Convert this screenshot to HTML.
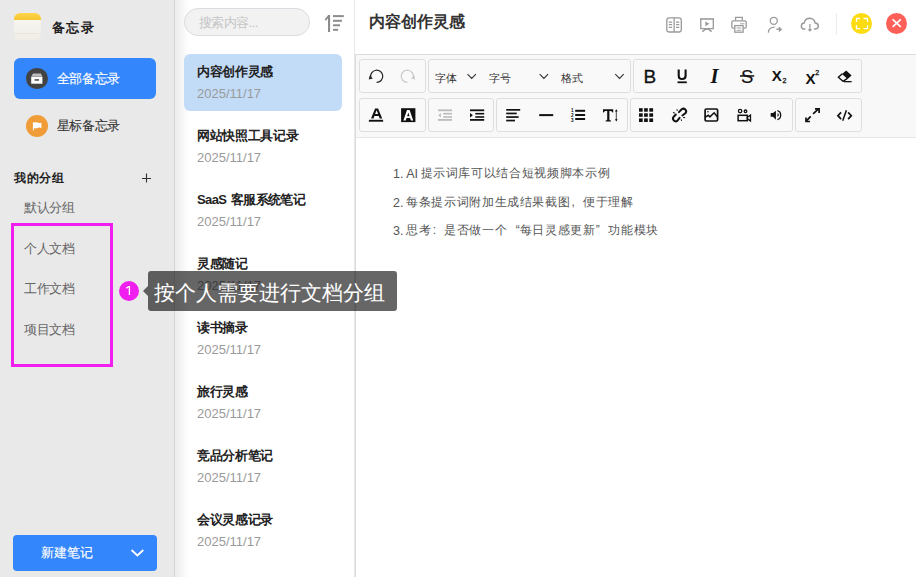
<!DOCTYPE html>
<html><head><meta charset="utf-8">
<style>
*{box-sizing:border-box;margin:0;padding:0}
html,body{width:916px;height:577px;overflow:hidden;background:#fff;font-family:"Liberation Sans",sans-serif;color:#333}
.abs{position:absolute}
.t{position:absolute;white-space:nowrap;line-height:1}
#side{position:absolute;left:0;top:0;width:175px;height:577px;background:#e9e9e9;border-right:1px solid #d4d4d4}
#mid{position:absolute;left:175px;top:0;width:180px;height:577px;background:#fff;border-right:1px solid #e6e8eb}
#midshadow{position:absolute;left:0;top:0;width:14px;height:577px;background:linear-gradient(to right,#ececec,rgba(255,255,255,0))}
.tt{position:absolute;left:22px;font-size:13px;letter-spacing:-.35px;font-weight:bold;color:#222;white-space:nowrap;line-height:1}
.dd{position:absolute;left:22px;font-size:13px;color:#9a9a9a;white-space:nowrap;line-height:1}
#tb{position:absolute;left:355px;top:54px;width:561px;height:84px;background:#f8f8f8;border-top:1px solid #dcdcdc;border-bottom:1px solid #e6e6e6;border-left:1px solid #dcdcdc}
.grp{position:absolute;height:34px;border:1px solid #dedede;border-radius:3px;background:#f9f9f9}
.ct{position:absolute;font-size:12px;letter-spacing:.65px;color:#555;white-space:nowrap;line-height:1}
.q{display:inline-block;width:12.65px;letter-spacing:0;font-size:12px}
</style></head><body>

<div id="side">
  <div class="abs" style="left:14px;top:13px;width:27px;height:27px;border-radius:6px;overflow:hidden;background:linear-gradient(#f9f8f3,#efede6)">
    <div class="abs" style="left:0;top:0;width:27px;height:7px;background:linear-gradient(#fdd64a,#f8c52e)"></div>
    <div class="abs" style="left:0;top:20px;width:27px;height:1px;background:#e7e5de"></div>
  </div>
  <div class="t" style="left:51.5px;top:20.5px;font-size:13px;letter-spacing:1.6px;font-weight:bold;color:#222">备忘录</div>

  <div class="abs" style="left:14px;top:58px;width:142px;height:41px;border-radius:6px;background:#3486fc"></div>
  <div class="abs" style="left:26.2px;top:67.8px;width:21.4px;height:21.2px;border-radius:50%;background:#434343"></div>
  <div class="t" style="left:56.5px;top:71.5px;font-size:13px;letter-spacing:-.3px;color:#fff;-webkit-text-stroke:.15px #fff">全部备忘录</div>

  <div class="abs" style="left:26px;top:115px;width:22px;height:22px;border-radius:50%;background:#f09c37"></div>
  <div class="t" style="left:56.5px;top:119px;font-size:13px;letter-spacing:-.3px;color:#333;-webkit-text-stroke:.1px #333">星标备忘录</div>

  <div class="t" style="left:14px;top:171.5px;font-size:12px;letter-spacing:.65px;font-weight:bold;color:#222">我的分组</div>

  <div class="t" style="left:24px;top:200.5px;font-size:13px;letter-spacing:-.3px;color:#666">默认分组</div>
  <div class="t" style="left:24px;top:242px;font-size:13px;letter-spacing:-.3px;color:#666">个人文档</div>
  <div class="t" style="left:24px;top:281.5px;font-size:13px;letter-spacing:-.3px;color:#666">工作文档</div>
  <div class="t" style="left:24px;top:322.5px;font-size:13px;letter-spacing:-.3px;color:#666">项目文档</div>

  <div class="abs" style="left:13px;top:535px;width:144px;height:36px;border-radius:4px;background:#3486fc"></div>
  <div class="t" style="left:41px;top:545.5px;font-size:13px;color:#fff;-webkit-text-stroke:.15px #fff">新建笔记</div>
</div>

<div id="mid">
  <div id="midshadow"></div>
  <div class="abs" style="left:9px;top:8px;width:126px;height:28px;border-radius:14px;background:#f2f2f2;border:1px solid #d9dce0"></div>
  <div class="t" style="left:23.5px;top:15.5px;font-size:13px;letter-spacing:-.5px;color:#c4c4c4">搜索内容...</div>

  <div class="abs" style="left:9px;top:54px;width:158px;height:57px;border-radius:6px;background:#c2dcf8"></div>
  <div class="tt" style="top:64.5px">内容创作灵感</div><div class="dd" style="top:87px">2025/11/17</div>
  <div class="tt" style="top:128.5px">网站快照工具记录</div><div class="dd" style="top:151px">2025/11/17</div>
  <div class="tt" style="top:192.5px"><span style="letter-spacing:-.6px;margin-right:1.3px">SaaS </span><span style="letter-spacing:-.6px">客服系统笔记</span></div><div class="dd" style="top:215px">2025/11/17</div>
  <div class="tt" style="top:256.5px">灵感随记</div><div class="dd" style="top:279px">2025/11/17</div>
  <div class="tt" style="top:320.5px">读书摘录</div><div class="dd" style="top:343px">2025/11/17</div>
  <div class="tt" style="top:384.5px">旅行灵感</div><div class="dd" style="top:407px">2025/11/17</div>
  <div class="tt" style="top:448.5px">竞品分析笔记</div><div class="dd" style="top:471px">2025/11/17</div>
  <div class="tt" style="top:512.5px">会议灵感记录</div><div class="dd" style="top:535px">2025/11/17</div>
</div>

<div class="t" style="left:369px;top:13.5px;font-size:16px;font-weight:bold;color:#333">内容创作灵感</div>

<div class="abs" style="left:355px;top:54px;width:1px;height:523px;background:#dcdcdc"></div>
<div id="tb">
  <div class="grp" style="left:3px;top:4px;width:67px"></div>
  <div class="grp" style="left:72px;top:4px;width:203px"></div>
  <div class="grp" style="left:277px;top:4px;width:229px"></div>
  <div class="grp" style="left:3px;top:43px;width:67px"></div>
  <div class="grp" style="left:72px;top:43px;width:66px"></div>
  <div class="grp" style="left:140px;top:43px;width:132px"></div>
  <div class="grp" style="left:274px;top:43px;width:163px"></div>
  <div class="grp" style="left:439px;top:43px;width:67px"></div>
  <div class="t" style="left:79px;top:17.5px;font-size:11px;color:#333">字体</div>
  <div class="t" style="left:133px;top:17.5px;font-size:11px;color:#333">字号</div>
  <div class="t" style="left:205px;top:17.5px;font-size:11px;color:#333">格式</div>
</div>

<div class="ct" style="left:393px;top:168px;letter-spacing:0;font-size:12.5px">1. AI</div>
<div class="ct" style="left:420.5px;top:167px">提示词库可以结合短视频脚本示例</div>
<div class="ct" style="left:393px;top:196.5px;letter-spacing:0;font-size:12.5px">2.</div>
<div class="ct" style="left:406px;top:195.5px">每条提示词附加生成结果截图<span class="q" style="text-align:left;text-indent:1px">,</span>便于理解</div>
<div class="ct" style="left:393px;top:224.5px;letter-spacing:0;font-size:12.5px">3.</div>
<div class="ct" style="left:406px;top:223.5px">思考<span class="q" style="text-align:left;text-indent:1.5px">:</span>是否做一个<span class="q" style="text-align:right">“</span>每日灵感更新<span class="q" style="text-align:left">”</span>功能模块</div>

<svg class="abs" style="left:0;top:0" width="916" height="577" viewBox="0 0 916 577">
  <!-- sidebar icons -->
  <path d="M31.5,76.2 L33,73.5 H40.8 L42.3,76.2 Z" fill="#bdbdbd"/>
  <rect x="31.2" y="76.6" width="11.2" height="7.1" fill="#fff"/>
  <rect x="34.6" y="79.2" width="4.4" height="1.5" fill="#434343"/>
  <path d="M33.5,122.3 V130.3" stroke="#fff" stroke-width="1.2"/>
  <path d="M34,122.6 Q36,121.8 37.5,122.6 T41.4,122.8 V128 Q39.5,127.2 37.5,128 T34,128 Z" fill="#fff"/>
  <!-- plus -->
  <path d="M142,178.5 H151 M146.5,173.5 V182.5" stroke="#333" stroke-width="1.1"/>
  <!-- new note chevron -->
  <path d="M131.5,550 L137.4,555.5 L143.3,550" stroke="#fff" stroke-width="1.8" fill="none"/>
  <!-- sort icon -->
  <g fill="#8c8c8c">
    <rect x="328" y="15" width="2.1" height="17"/>
    <path d="M324.6,19.6 L328.2,15 L330,15.8 L326,20.8 Z"/>
    <rect x="333" y="15.1" width="10.8" height="2"/>
    <rect x="333" y="19.8" width="8.9" height="2"/>
    <rect x="333" y="24.3" width="7" height="2"/>
    <rect x="333" y="28.8" width="5.1" height="2"/>
  </g>
  <!-- header icons -->
  <g fill="none" stroke="#9a9a9a" stroke-width="1.3">
    <rect x="666.8" y="17.8" width="14.5" height="14.2" rx="2.5"/>
    <path d="M674.1,17.8 V32"/>
    <path d="M668.8,22.1 H672.1 M668.8,24.6 H672.1 M668.8,27.4 H672.1 M676,22.1 H679.3 M676,24.6 H679.3 M676,27.4 H679.3" stroke-width="1.1"/>
    <path d="M700,19 H714" stroke-width="1.6"/>
    <path d="M700.8,19 V28.6 H713.3 V19"/>
    <path d="M702.4,31.6 L705.2,29.3 Q707,28.5 708.8,29.3 L711.6,31.6" stroke-width="1.5"/>
    <path d="M735.6,20.5 V17.4 H742.3 V20.5"/>
    <path d="M734.4,28.2 H733.2 Q731.8,28.2 731.8,26.8 V22.3 Q731.8,20.9 733.2,20.9 H744.8 Q746.2,20.9 746.2,22.3 V26.8 Q746.2,28.2 744.8,28.2 H743.2"/>
    <rect x="734.8" y="25.6" width="8.3" height="6.6"/>
    <path d="M736.6,28 H741.3 M736.6,30.3 H741.3" stroke-width="0.9"/>
    <path d="M740,23.8 H744.4" stroke-width="0.9"/>
    <circle cx="773.8" cy="20.8" r="3.5"/>
    <path d="M768.3,32.6 Q768.6,27.3 774.6,27.1"/>
    <path d="M776.4,29.3 H781 M778.9,27.2 L781.1,29.3 L778.9,31.4" stroke-width="1.4"/>
    <path stroke-width="1.45" d="M805.4,29 H804 Q801.3,28.8 801.3,26 Q801.4,23.3 804.2,23 Q805.2,18.3 809.8,18.3 Q814.2,18.5 815.2,23 Q818.3,23.2 818.3,26 Q818.1,28.8 815.4,29 H814"/>
    <path d="M809.9,24 V31"/>
  </g>
  <path d="M807.6,29.2 L809.9,31.8 L812.2,29.2 Z M705.3,21.4 L709.4,23.8 L705.3,26.2 Z" fill="#9a9a9a"/>
  <rect x="836" y="13" width="1" height="22" fill="#ececec"/>
  <circle cx="861.5" cy="23.5" r="10.5" fill="#fddb11"/>
  <path d="M856.5,22 V18.5 H860 M863.5,18.5 H867.5 V22 M867.5,25 V28.6 H863.5 M860,28.6 H856.5 V25" stroke="#fff" stroke-width="1.3" fill="none"/>
  <circle cx="896.5" cy="23.5" r="10.5" fill="#fe5f57"/>
  <path d="M892.6,19.3 L900.8,26.9 M900.8,19.3 L892.6,26.9" stroke="#fff" stroke-width="1.7"/>

  <!-- toolbar row 1 -->
  <g fill="none" stroke="#222" stroke-width="1.2">
    <path d="M370.7,77.6 A6.1,6.1 0 1 1 376.6,82.4"/>
  </g>
  <path d="M368.8,79.6 L369.6,75.6 L372.9,78.4 Z" fill="#222"/>
  <g fill="none" stroke="#c8c8c8" stroke-width="1.2">
    <path d="M413.3,77.6 A6.1,6.1 0 1 0 407.4,82.4"/>
  </g>
  <path d="M415.2,79.6 L414.4,75.6 L411.1,78.4 Z" fill="#c8c8c8"/>
  <path d="M467.5,74.2 L471.7,78.4 L475.9,74.2 M539.7,74.2 L543.9,78.4 L548.1,74.2 M615.3,74.2 L619.5,78.4 L623.7,74.2" stroke="#333" stroke-width="1.1" fill="none"/>

  <text x="643.6" y="83" font-family="Liberation Sans" font-size="19" fill="#111" stroke="#111" stroke-width="0.3">B</text>
  <path d="M678.7,69.5 V75.4 Q678.7,79 682.15,79 Q685.6,79 685.6,75.4 V69.5" stroke="#111" stroke-width="2.1" fill="none"/>
  <rect x="677.5" y="81.4" width="9.3" height="1.8" fill="#111"/>
  <text x="710.6" y="83" font-family="Liberation Serif" font-size="20.5" font-style="italic" font-weight="bold" fill="#111">I</text>
  <text x="741" y="83" font-family="Liberation Sans" font-size="18.5" fill="#111" stroke="#111" stroke-width="0.15">S</text>
  <rect x="740" y="75.2" width="14.2" height="1.5" fill="#111"/>
  <text x="771.8" y="80.6" font-family="Liberation Sans" font-size="15" font-weight="bold" fill="#111">X</text>
  <text x="782.4" y="82.7" font-family="Liberation Sans" font-size="7" fill="#111" stroke="#111" stroke-width="0.3">2</text>
  <text x="805.4" y="83.6" font-family="Liberation Sans" font-size="15" font-weight="bold" fill="#111">X</text>
  <text x="815.3" y="75" font-family="Liberation Sans" font-size="7" fill="#111" stroke="#111" stroke-width="0.3">2</text>
  <path d="M842.3,73.8 L838.3,77.2 L843,81.3 L847.4,78.3" fill="none" stroke="#111" stroke-width="1.4" stroke-linejoin="round"/>
  <path d="M846.2,70.6 L851.6,75.6 L847.6,78.9 L842,73.9 Z" fill="#111"/>
  <rect x="844" y="81" width="7.6" height="1.3" fill="#111"/>

  <!-- toolbar row 2 -->
  <path fill-rule="evenodd" d="M371,118.4 L375.1,108.5 H378.1 L382.2,118.4 H379.7 L378.8,116.1 H374.4 L373.5,118.4 Z M375.1,114.1 H378.1 L376.6,110.3 Z" fill="#111"/>
  <rect x="368.9" y="119.8" width="14.2" height="1.9" fill="#111"/>
  <rect x="401.1" y="108.2" width="14.3" height="13.9" fill="#111"/>
  <path fill-rule="evenodd" d="M403.4,120.4 L407,110 H409.6 L413.2,120.4 H410.9 L410.1,118.1 H406.5 L405.7,120.4 Z M407.1,116.2 H409.5 L408.3,112.4 Z" fill="#fff"/>

  <g fill="#bbb">
    <rect x="438" y="109.4" width="14" height="1.8"/>
    <rect x="443.2" y="112.9" width="8.8" height="1.6"/>
    <rect x="443.2" y="116.2" width="8.8" height="1.6"/>
    <rect x="438" y="119" width="14" height="1.8"/>
    <path d="M438.3,115.3 L440.9,113 V117.6 Z"/>
  </g>
  <g fill="#111">
    <rect x="470" y="109.4" width="14.2" height="1.8"/>
    <rect x="475.3" y="112.9" width="8.9" height="1.6"/>
    <rect x="475.3" y="116.2" width="8.9" height="1.6"/>
    <rect x="470" y="119" width="14.2" height="1.8"/>
    <path d="M472.9,115.3 L470,113 V117.6 Z"/>
  </g>
  <g fill="#111">
    <rect x="506.2" y="109" width="14" height="1.7"/>
    <rect x="506.2" y="112.6" width="10.5" height="1.7"/>
    <rect x="506.2" y="116.2" width="12.4" height="1.7"/>
    <rect x="506.2" y="119.7" width="8.8" height="1.7"/>
    <rect x="539.2" y="114.1" width="14" height="2"/>
    <rect x="575.2" y="109.8" width="9.9" height="2"/>
    <rect x="575.2" y="114" width="9.9" height="2"/>
    <rect x="575.2" y="118" width="9.9" height="2"/>
  </g>
  <text x="571" y="111.7" font-family="Liberation Sans" font-size="4.6" font-weight="bold" fill="#111">1</text>
  <text x="571" y="116.9" font-family="Liberation Sans" font-size="4.6" font-weight="bold" fill="#111">2</text>
  <text x="571" y="122.2" font-family="Liberation Sans" font-size="4.6" font-weight="bold" fill="#111">3</text>
  <path d="M603,109.2 H613.2 V112.4 H612.5 Q612.1,110.9 610.6,110.9 H609.4 V119.6 Q609.4,120.5 611,120.6 V121.6 H605.6 V120.6 Q607.2,120.5 607.2,119.6 V110.9 H605.6 Q604.1,110.9 603.7,112.4 H603 Z" fill="#111"/>
  <path d="M616.3,110.5 V120" stroke="#333" stroke-width="0.9"/>
  <path d="M614.9,111.4 L616.3,109.2 L617.7,111.4 Z M614.9,119.2 L616.3,121.4 L617.7,119.2 Z" fill="#111"/>

  <g fill="#111">
    <rect x="639" y="108.2" width="3.7" height="3.5"/><rect x="644.1" y="108.2" width="3.7" height="3.5"/><rect x="649.3" y="108.2" width="3.8" height="3.5"/>
    <rect x="639" y="113.3" width="3.7" height="3.5"/><rect x="644.1" y="113.3" width="3.7" height="3.5"/><rect x="649.3" y="113.3" width="3.8" height="3.5"/>
    <rect x="639" y="118.4" width="3.7" height="3.6"/><rect x="644.1" y="118.4" width="3.7" height="3.6"/><rect x="649.3" y="118.4" width="3.8" height="3.6"/>
  </g>
  <g fill="none" stroke="#111" stroke-width="2" stroke-linecap="round">
    <path d="M678.9,112.1 L681.7,109.3 A2.75,2.75 0 0 1 685.6,113.1 L682.4,115.5"/>
    <path d="M675.8,114.5 L673.4,117.1 A2.75,2.75 0 0 0 677.3,120.8 L679.6,117.8"/>
  </g>
  <path d="M676.8,109.3 L677.4,110.8 M673.1,112.2 L674.7,113.3 M683.1,117.5 L685.1,117.6 M681.2,119.3 L681.6,120.9" stroke="#222" stroke-width="1.1"/>
  <rect x="705.1" y="109" width="12.5" height="12" rx="1.2" fill="none" stroke="#111" stroke-width="1.7"/>
  <path d="M705,117.3 L708.3,115.3 L709.9,116.9 L714.1,112.8 L717.5,117" fill="none" stroke="#111" stroke-width="1.5"/>
  <circle cx="707.9" cy="111.8" r="0.8" fill="#111"/>
  <circle cx="740.1" cy="111.1" r="1.7" fill="none" stroke="#111" stroke-width="1.3"/>
  <circle cx="745.5" cy="111.3" r="1.3" fill="none" stroke="#111" stroke-width="1.3"/>
  <rect x="738.1" y="115.3" width="9.2" height="5.4" fill="none" stroke="#111" stroke-width="1.5"/>
  <path d="M747.4,117.2 L750.5,115.1 V120.9 L747.4,118.8 Z" fill="none" stroke="#111" stroke-width="1.3"/>
  <path d="M770.7,113.1 H773 L775.9,110.8 V119.7 L773,116.8 H770.7 Z" fill="#111"/>
  <path d="M777.4,110.7 A4.4,4.6 0 0 1 777.4,119.6" fill="none" stroke="#111" stroke-width="1.3"/>
  <path d="M777.3,113.3 A1.8,1.75 0 0 1 777.3,116.8 Z" fill="#555"/>

  <g fill="none" stroke="#111" stroke-width="1.7">
    <path d="M813.1,113.9 L818.5,108.9 M810.7,116.3 L806.2,121.1"/>
    <path d="M815,108.9 H819.1 V113 M806,117.4 V121.5 H810"/>
    <path d="M841.1,112.3 L837.9,115.7 L841.1,119.1 M848.1,112.3 L851.3,115.7 L848.1,119.1" stroke-width="1.7"/>
    <path d="M846.4,110.3 L842.7,120.7" stroke-width="1.5"/>
  </g>
</svg>

<!-- annotation -->
<div class="abs" style="left:11px;top:223px;width:102px;height:144px;border:3px solid #f01ff0"></div>
<div class="abs" style="left:119px;top:281px;width:20px;height:20px;border-radius:50%;background:#f01ff0"></div>
<svg class="abs" style="left:0;top:0" width="916" height="577"><path d="M129.4,286 V295.1 M129.6,286.2 L126.3,288.1" stroke="#fff" stroke-width="1.3" fill="none"/></svg>
<div class="abs" style="left:148px;top:271px;width:249px;height:40px;border-radius:3px;background:rgba(0,0,0,0.6)"></div>
<div class="abs" style="left:143px;top:286px;width:0;height:0;border-top:5px solid transparent;border-bottom:5px solid transparent;border-right:5px solid rgba(0,0,0,0.6)"></div>
<div class="t" style="left:154px;top:281.5px;font-size:21px;color:#fff">按个人需要进行文档分组</div>

</body></html>
